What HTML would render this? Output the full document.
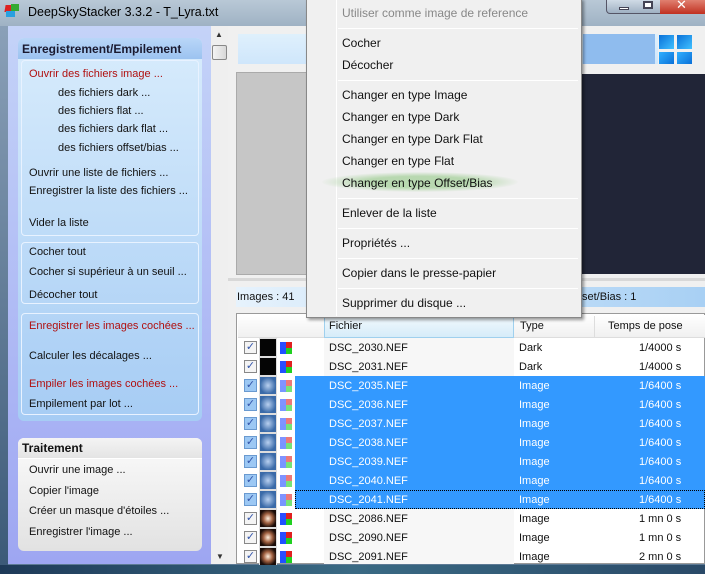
<!DOCTYPE html>
<html><head><meta charset="utf-8"><style>
*{margin:0;padding:0;box-sizing:border-box}
body{width:705px;height:574px;overflow:hidden;position:relative;font-family:"Liberation Sans","DejaVu Sans",sans-serif;font-size:11px;color:#111;background:#5d7a95}
.a{position:absolute}
.t{position:absolute;white-space:nowrap}
.red{color:#b01010}
.grp{position:absolute;border:1px solid #e8f2ff;border-radius:4px}
.row{position:absolute;left:238px;width:467px;height:19px}
.row .t{top:4px}
.cb{position:absolute;left:6px;top:3px;width:13px;height:13px;border:1px solid #888;background:#f4f4f4;font-size:11px;line-height:11px;text-align:center;color:#3355aa}
.th{position:absolute;left:21px;top:0;width:18px;height:19px;border:1px solid #ddd}
.ic{position:absolute;left:42px;top:4px;width:12px;height:12px;background:linear-gradient(90deg,#2c4cff 50%,#e02020 50%);}
.ic:after{content:"";position:absolute;left:0;top:6px;width:12px;height:6px;background:linear-gradient(90deg,#2050ff 50%,#20d020 50%)}
.mi{position:absolute;left:342px;white-space:nowrap;font-size:12px}
.sep{position:absolute;left:338px;width:240px;height:1px;background:#d8d8d8;border-bottom:1px solid #fff}
</style></head><body>
<div class="a" style="left:0;top:0;width:705px;height:26px;background:linear-gradient(#b9c8d6,#9fb2c4)"></div>
<div class="a" style="left:5px;top:5px;width:8px;height:7px;background:#d22;transform:skewX(-10deg)"></div>
<div class="a" style="left:11px;top:4px;width:8px;height:7px;background:#3a3;"></div>
<div class="a" style="left:6px;top:11px;width:9px;height:6px;background:#2aa0e0"></div>
<div class="t" style="left:28px;top:5px;font-size:12.5px;color:#000">DeepSkyStacker 3.3.2 - T_Lyra.txt</div>
<div class="a" style="left:606px;top:0;width:75px;height:14px;border:1px solid #556;border-top:0;border-radius:0 0 4px 4px;background:linear-gradient(#d0dbe6,#9fb0c2)"></div>
<div class="a" style="left:660px;top:0;width:45px;height:14px;background:linear-gradient(#e08070,#c03020)"></div>
<div class="t" style="left:676px;top:-3px;color:#fff;font-weight:bold;font-size:13px">✕</div>
<div class="a" style="left:619px;top:7px;width:10px;height:3px;background:#fff;border:1px solid #445"></div>
<div class="a" style="left:643px;top:1px;width:10px;height:8px;border:2px solid #445;background:#fff"></div>
<div class="a" style="left:8px;top:26px;width:697px;height:538px;background:#f0f0f0"></div>
<div class="a" style="left:8px;top:26px;width:203px;height:538px;background:linear-gradient(#c4d3f8,#9ea6f2)"></div>
<div class="a" style="left:18px;top:38px;width:184px;height:383px;border-radius:6px;background:linear-gradient(#d8ecfc,#a6ccf4)"></div>
<div class="a" style="left:18px;top:38px;width:184px;height:21px;border-radius:6px 6px 0 0;background:linear-gradient(#b9d6f8,#9cc3f0)"></div>
<div class="t" style="left:22px;top:42px;font-weight:bold;font-size:12px;color:#1a1a30">Enregistrement/Empilement</div>
<div class="grp" style="left:21px;top:60px;width:178px;height:176px"></div>
<div class="t red" style="left:29px;top:68px">Ouvrir des fichiers image ...</div>
<div class="t" style="left:58px;top:87px">des fichiers dark ...</div>
<div class="t" style="left:58px;top:105px">des fichiers flat ...</div>
<div class="t" style="left:58px;top:123px">des fichiers dark flat ...</div>
<div class="t" style="left:58px;top:142px">des fichiers offset/bias ...</div>
<div class="t" style="left:29px;top:167px">Ouvrir une liste de fichiers ...</div>
<div class="t" style="left:29px;top:185px">Enregistrer la liste des fichiers ...</div>
<div class="t" style="left:29px;top:217px">Vider la liste</div>
<div class="grp" style="left:21px;top:242px;width:178px;height:62px"></div>
<div class="t" style="left:29px;top:246px">Cocher tout</div>
<div class="t" style="left:29px;top:266px">Cocher si supérieur à un seuil ...</div>
<div class="t" style="left:29px;top:289px">Décocher tout</div>
<div class="grp" style="left:21px;top:313px;width:178px;height:102px"></div>
<div class="t red" style="left:29px;top:320px">Enregistrer les images cochées ...</div>
<div class="t" style="left:29px;top:350px">Calculer les décalages ...</div>
<div class="t red" style="left:29px;top:378px">Empiler les images cochées ...</div>
<div class="t" style="left:29px;top:398px">Empilement par lot ...</div>
<div class="a" style="left:18px;top:438px;width:184px;height:113px;border-radius:6px;background:linear-gradient(#fbfbfb,#e2e2e2)"></div>
<div class="a" style="left:18px;top:438px;width:184px;height:21px;border-radius:6px 6px 0 0;background:linear-gradient(#f4f4f4,#e4e4e4);border-bottom:1px solid #fff"></div>
<div class="t" style="left:22px;top:441px;font-weight:bold;font-size:12px">Traitement</div>
<div class="t" style="left:29px;top:464px">Ouvrir une image ...</div>
<div class="t" style="left:29px;top:485px">Copier l'image</div>
<div class="t" style="left:29px;top:505px">Créer un masque d'étoiles ...</div>
<div class="t" style="left:29px;top:526px">Enregistrer l'image ...</div>
<div class="a" style="left:211px;top:26px;width:17px;height:538px;background:#efefef"></div>
<div class="t" style="left:215px;top:30px;font-size:8px;color:#333">▲</div>
<div class="a" style="left:212px;top:45px;width:15px;height:15px;border:1px solid #888;border-radius:2px;background:linear-gradient(90deg,#f4f4f4,#d8d8d8)"></div>
<div class="t" style="left:216px;top:552px;font-size:8px;color:#333">▼</div>
<div class="a" style="left:238px;top:34px;width:420px;height:30px;background:linear-gradient(#dff0fc,#cfe6fb)"></div>
<div class="a" style="left:583px;top:34px;width:72px;height:30px;background:#8fbcee"></div>
<div class="a" style="left:659px;top:35px;width:15px;height:14px;background:linear-gradient(135deg,#0a70d8,#40c0ff)"></div>
<div class="a" style="left:677px;top:35px;width:15px;height:14px;background:linear-gradient(135deg,#0a70d8,#40c0ff)"></div>
<div class="a" style="left:659px;top:52px;width:15px;height:12px;background:linear-gradient(135deg,#30b0ff,#0a70d8)"></div>
<div class="a" style="left:677px;top:52px;width:15px;height:12px;background:linear-gradient(135deg,#30b0ff,#0a70d8)"></div>
<div class="a" style="left:236px;top:72px;width:72px;height:203px;background:#c6c6c6;border:1px solid #aaa"></div>
<div class="a" style="left:581px;top:74px;width:124px;height:200px;background:#212537"></div>
<div class="a" style="left:228px;top:278px;width:477px;height:3px;background:#d8d8d8"></div>
<div class="a" style="left:236px;top:287px;width:469px;height:20px;background:linear-gradient(90deg,#e6f2fc,#a8d0f4)"></div>
<div class="t" style="left:237px;top:291px">Images : 41</div>
<div class="t" style="left:582px;top:291px">set/Bias : 1</div>
<div class="a" style="left:236px;top:313px;width:469px;height:251px;background:#fff;border:1px solid #999"></div>
<div class="a" style="left:238px;top:315px;width:467px;height:23px;background:linear-gradient(#fff,#f0f0f0);border-bottom:1px solid #ddd"></div>
<div class="a" style="left:324px;top:315px;width:190px;height:23px;background:linear-gradient(#f2f9fd,#d6ecf9);border:1px solid #9fd0ee"></div>
<div class="t" style="left:329px;top:320px">Fichier</div>
<div class="a" style="left:594px;top:316px;width:1px;height:21px;background:#ddd"></div>
<div class="t" style="left:520px;top:320px">Type</div>
<div class="t" style="left:608px;top:320px">Temps de pose</div>
<div class="a" style="left:324px;top:338px;width:190px;height:226px;background:#f7f7f7"></div>

<div class="row" style="top:338px"><div class="cb">✓</div><div class="th" style="background:#050505"></div><div class="ic"></div><span class="t" style="left:91px">DSC_2030.NEF</span><span class="t" style="left:281px">Dark</span><span class="t" style="left:401px">1/4000 s</span></div>
<div class="row" style="top:357px"><div class="cb">✓</div><div class="th" style="background:#050505"></div><div class="ic"></div><span class="t" style="left:91px">DSC_2031.NEF</span><span class="t" style="left:281px">Dark</span><span class="t" style="left:401px">1/4000 s</span></div>
<div class="a" style="left:295px;top:376px;width:410px;height:133px;background:#3399ff"></div>
<div class="row" style="top:376px;color:#fff"><div class="cb" style="background:#9cc8f4;border-color:#6a9ad0">✓</div><div class="th" style="background:radial-gradient(#b8d0f0,#3a6aa8 70%)"></div><div class="ic" style="opacity:.6"></div><span class="t" style="left:91px">DSC_2035.NEF</span><span class="t" style="left:281px">Image</span><span class="t" style="left:401px">1/6400 s</span></div>
<div class="row" style="top:395px;color:#fff"><div class="cb" style="background:#9cc8f4;border-color:#6a9ad0">✓</div><div class="th" style="background:radial-gradient(#b8d0f0,#3a6aa8 70%)"></div><div class="ic" style="opacity:.6"></div><span class="t" style="left:91px">DSC_2036.NEF</span><span class="t" style="left:281px">Image</span><span class="t" style="left:401px">1/6400 s</span></div>
<div class="row" style="top:414px;color:#fff"><div class="cb" style="background:#9cc8f4;border-color:#6a9ad0">✓</div><div class="th" style="background:radial-gradient(#b8d0f0,#3a6aa8 70%)"></div><div class="ic" style="opacity:.6"></div><span class="t" style="left:91px">DSC_2037.NEF</span><span class="t" style="left:281px">Image</span><span class="t" style="left:401px">1/6400 s</span></div>
<div class="row" style="top:433px;color:#fff"><div class="cb" style="background:#9cc8f4;border-color:#6a9ad0">✓</div><div class="th" style="background:radial-gradient(#b8d0f0,#3a6aa8 70%)"></div><div class="ic" style="opacity:.6"></div><span class="t" style="left:91px">DSC_2038.NEF</span><span class="t" style="left:281px">Image</span><span class="t" style="left:401px">1/6400 s</span></div>
<div class="row" style="top:452px;color:#fff"><div class="cb" style="background:#9cc8f4;border-color:#6a9ad0">✓</div><div class="th" style="background:radial-gradient(#b8d0f0,#3a6aa8 70%)"></div><div class="ic" style="opacity:.6"></div><span class="t" style="left:91px">DSC_2039.NEF</span><span class="t" style="left:281px">Image</span><span class="t" style="left:401px">1/6400 s</span></div>
<div class="row" style="top:471px;color:#fff"><div class="cb" style="background:#9cc8f4;border-color:#6a9ad0">✓</div><div class="th" style="background:radial-gradient(#b8d0f0,#3a6aa8 70%)"></div><div class="ic" style="opacity:.6"></div><span class="t" style="left:91px">DSC_2040.NEF</span><span class="t" style="left:281px">Image</span><span class="t" style="left:401px">1/6400 s</span></div>
<div class="a" style="left:295px;top:490px;width:410px;height:19px;border:1px dotted #000"></div>
<div class="row" style="top:490px;color:#fff"><div class="cb" style="background:#9cc8f4;border-color:#6a9ad0">✓</div><div class="th" style="background:radial-gradient(#b8d0f0,#3a6aa8 70%)"></div><div class="ic" style="opacity:.6"></div><span class="t" style="left:91px">DSC_2041.NEF</span><span class="t" style="left:281px">Image</span><span class="t" style="left:401px">1/6400 s</span></div>
<div class="row" style="top:509px"><div class="cb">✓</div><div class="th" style="background:radial-gradient(#fff0e0,#a06040 40%,#1a0c08 75%)"></div><div class="ic"></div><span class="t" style="left:91px">DSC_2086.NEF</span><span class="t" style="left:281px">Image</span><span class="t" style="left:401px">1 mn 0 s</span></div>
<div class="row" style="top:528px"><div class="cb">✓</div><div class="th" style="background:radial-gradient(#fff0e0,#a06040 40%,#1a0c08 75%)"></div><div class="ic"></div><span class="t" style="left:91px">DSC_2090.NEF</span><span class="t" style="left:281px">Image</span><span class="t" style="left:401px">1 mn 0 s</span></div>
<div class="row" style="top:547px"><div class="cb">✓</div><div class="th" style="background:radial-gradient(#fff0e0,#a06040 40%,#1a0c08 75%)"></div><div class="ic"></div><span class="t" style="left:91px">DSC_2091.NEF</span><span class="t" style="left:281px">Image</span><span class="t" style="left:401px">2 mn 0 s</span></div>
<div class="a" style="left:0;top:565px;width:705px;height:9px;background:linear-gradient(90deg,#1e3a58,#3a6a84,#2a4a68)"></div>
<div class="a" style="left:0;top:26px;width:8px;height:539px;background:linear-gradient(#8aa0b8,#3c5a78)"></div>
<div class="a" style="left:306px;top:-2px;width:276px;height:320px;background:#f0f0f0;border:1px solid #888;box-shadow:2px 2px 3px rgba(0,0,0,.4)"></div>
<div class="a" style="left:336px;top:0;width:1px;height:316px;background:#e0e0e0;border-right:1px solid #fff"></div>
<div class="mi" style="top:6px;color:#888">Utiliser comme image de reference</div>
<div class="sep" style="top:28px"></div>
<div class="mi" style="top:36px">Cocher</div>
<div class="mi" style="top:58px">Décocher</div>
<div class="sep" style="top:80px"></div>
<div class="a" style="left:322px;top:172px;width:196px;height:20px;border-radius:50%;background:radial-gradient(ellipse,#b8d8b0 40%,rgba(200,225,195,0) 72%)"></div>
<div class="mi" style="top:88px">Changer en type Image</div>
<div class="mi" style="top:110px">Changer en type Dark</div>
<div class="mi" style="top:132px">Changer en type Dark Flat</div>
<div class="mi" style="top:154px">Changer en type Flat</div>
<div class="mi" style="top:176px">Changer en type Offset/Bias</div>
<div class="sep" style="top:198px"></div>
<div class="mi" style="top:206px">Enlever de la liste</div>
<div class="sep" style="top:228px"></div>
<div class="mi" style="top:236px">Propriétés ...</div>
<div class="sep" style="top:258px"></div>
<div class="mi" style="top:266px">Copier dans le presse-papier</div>
<div class="sep" style="top:288px"></div>
<div class="mi" style="top:296px">Supprimer du disque ...</div>
</body></html>
